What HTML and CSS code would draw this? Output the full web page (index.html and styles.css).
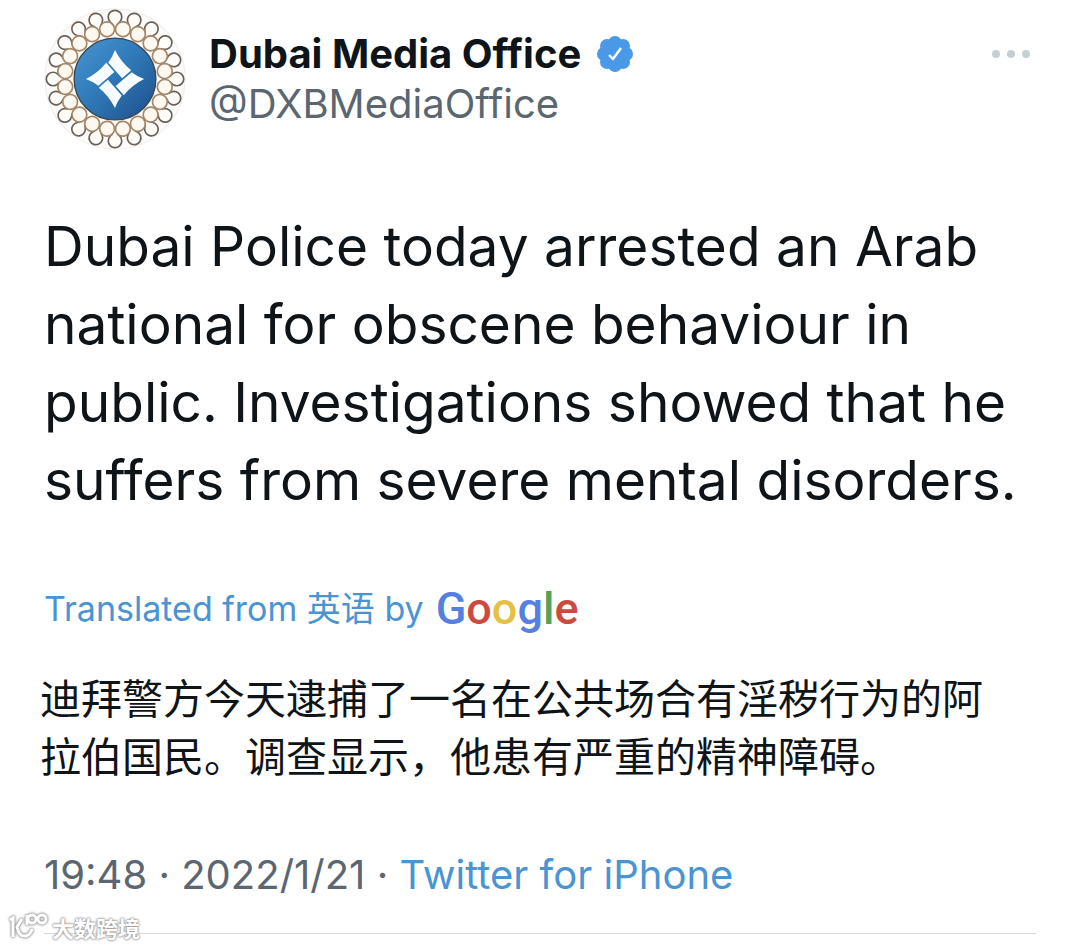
FILE: index.html
```html
<!DOCTYPE html>
<html lang="en">
  <head>
    <meta charset="UTF-8" />
    <meta name="viewport" content="width=device-width, initial-scale=1.0" />
    <title>Dubai Media Office</title>
    <link rel="stylesheet" href="styles.css">
  </head>
  <body>
    <article class="tweet">
      <header class="tweet-header">
        <svg class="avatar" viewBox="-210 -210 420 420" role="img" aria-label="Dubai Media Office">
          <defs>
            <linearGradient id="disc" x1="0" y1="0" x2="1" y2="1">
              <stop offset="0" stop-color="#4596d2" />
              <stop offset="0.5" stop-color="#2f77b6" />
              <stop offset="1" stop-color="#1d4d88" />
            </linearGradient>
            <path id="loop" class="loop" d="M-14 -148C-2 -156 -8 -164 -15 -170A20 20 0 1 1 15 -170C8 -164 2 -156 14 -148" />
            <circle id="ring" class="ring" cx="0" cy="-149" r="22" transform="rotate(9)" />
            <g id="loops">
              <use href="#loop" />
              <use href="#loop" transform="rotate(18)" />
              <use href="#loop" transform="rotate(36)" />
              <use href="#loop" transform="rotate(54)" />
              <use href="#loop" transform="rotate(72)" />
            </g>
            <g id="rings">
              <use href="#ring" />
              <use href="#ring" transform="rotate(18)" />
              <use href="#ring" transform="rotate(36)" />
              <use href="#ring" transform="rotate(54)" />
              <use href="#ring" transform="rotate(72)" />
            </g>
            <path id="blade" d="M0 -86Q18 -50 48 -26L21 -2L-20 -49Q-7 -66 0 -86Z" />
          </defs>
          <circle class="avatar-bg" r="207" />
          <use href="#loops" />
          <use href="#loops" transform="rotate(90)" />
          <use href="#loops" transform="rotate(180)" />
          <use href="#loops" transform="rotate(270)" />
          <use href="#rings" />
          <use href="#rings" transform="rotate(90)" />
          <use href="#rings" transform="rotate(180)" />
          <use href="#rings" transform="rotate(270)" />
          <circle class="disc" r="121" fill="url(#disc)" />
          <g fill="#f6fcff">
            <use href="#blade" />
            <use href="#blade" transform="rotate(90)" />
            <use href="#blade" transform="rotate(180)" />
            <use href="#blade" transform="rotate(270)" />
          </g>
        </svg>
        <div class="author">
          <div class="name-row">
            <h1 class="name">Dubai Media Office</h1>
            <svg class="verified" viewBox="0 0 36 36" role="img" aria-label="Verified account">
              <g fill="#4a99e9">
                <circle cx="18" cy="18" r="14" />
                <circle cx="18" cy="7" r="7" />
                <circle cx="26" cy="10" r="7" />
                <circle cx="29" cy="18" r="7" />
                <circle cx="26" cy="26" r="7" />
                <circle cx="18" cy="29" r="7" />
                <circle cx="10" cy="26" r="7" />
                <circle cx="7" cy="18" r="7" />
                <circle cx="10" cy="10" r="7" />
              </g>
              <path d="M12 19L16 23L24 12" fill="none" stroke="#fff" stroke-width="2.4" />
            </svg>
          </div>
          <a class="handle" href="#">@DXBMediaOffice</a>
        </div>
        <button class="more" type="button" aria-label="More">
          <svg viewBox="0 0 50 12" fill="#c4d0d3">
            <circle cx="10" cy="6" r="4" />
            <circle cx="25" cy="6" r="4" />
            <circle cx="40" cy="6" r="4" />
          </svg>
        </button>
      </header>

      <p class="text">Dubai Police today arrested an Arab national for obscene behaviour in public. Investigations showed that he suffers from severe mental disorders.</p>

      <a class="translated" href="#">
        <span>Translated from <span lang="zh">英语</span> by</span>
        <span class="google"><span class="blue">G</span><span class="red">o</span><span class="yellow">o</span><span class="blue">g</span><span class="green">l</span><span class="red">e</span></span>
      </a>

      <p class="translation" lang="zh">迪拜警方今天逮捕了一名在公共场合有淫秽行为的阿拉伯国民。调查显示，他患有严重的精神障碍。</p>

      <footer class="meta">
        <time datetime="2022-01-21T19:48">19:48 · 2022/1/21</time> · <a href="#">Twitter for iPhone</a>
      </footer>

      <div class="watermark" lang="zh">
        <svg viewBox="0 0 40 30" aria-hidden="true">
          <path d="M2 8L5 6V25" />
          <path d="M14 7L9 15Q11 25 18 24Q23 22 24 17" />
          <path d="M19 3V13" />
          <circle cx="24" cy="7" r="4" />
          <circle cx="34" cy="7" r="4" />
        </svg>
        <span>大数跨境</span>
      </div>
    </article>
  </body>
</html>
```
FILE: styles.css
```css
:root {
  --ink: #0f1419;
  --muted: #5b6671;
  --link: #4a94d4;
}

* {
  box-sizing: border-box;
  margin: 0;
  padding: 0;
}

body {
  min-height: 100vh;
  background: #fff;
  color: var(--ink);
  font-family: Inter, "Noto Sans CJK SC", sans-serif;
}

a {
  color: var(--link);
  text-decoration: none;
}

.tweet {
  position: relative;
  padding: 8px 44px 0;
}

.tweet-header {
  display: flex;
  align-items: flex-start;
}

.avatar {
  width: 142px;
  height: 142px;
  flex: none;
}

.avatar-bg {
  fill: #fcfbf9;
  stroke: #ececec;
  stroke-width: 3;
}

.loop {
  fill: #fffdfa;
  stroke: #6b6058;
  stroke-width: 5;
}

.ring {
  fill: #fdf8f0;
  stroke: #a58769;
  stroke-width: 5;
}

.disc {
  stroke: #3b4650;
  stroke-width: 4;
}

.author {
  flex: 1;
  padding: 21px 0 0 23px;
}

.name-row {
  display: flex;
  align-items: center;
  gap: 16px;
}

.name {
  font-size: 40px;
  font-weight: 700;
  line-height: 50px;
}

.verified {
  width: 36px;
  height: 36px;
}

.handle {
  color: var(--muted);
  font-size: 40px;
  line-height: 50px;
}

.more {
  border: none;
  background: none;
  margin-top: 40px;
  cursor: pointer;
}

.more svg {
  display: block;
  width: 50px;
  height: 12px;
}

.text {
  margin-top: 57px;
  font-size: 55px;
  line-height: 78px;
}

.translated {
  display: flex;
  align-items: center;
  gap: 12px;
  margin-top: 62px;
  font-size: 34px;
  line-height: 56px;
}

.google {
  font-family: Roboto, sans-serif;
  font-size: 45px;
  font-weight: 500;
}

.blue {
  color: #557fe0;
}

.red {
  color: #cc4b3f;
}

.yellow {
  color: #e6bf45;
}

.green {
  color: #54a058;
}

.translation {
  margin: 30px 16px 0 -4px;
  font-family: "Noto Sans CJK SC", sans-serif;
  font-size: 41px;
  line-height: 58px;
}

.meta {
  padding: 64px 0 30px;
  border-bottom: 1px solid #d5d9db;
  color: var(--muted);
  font-size: 40px;
  line-height: 56px;
}

.watermark {
  position: absolute;
  left: 8px;
  bottom: -9px;
  display: flex;
  align-items: center;
  gap: 4px;
  color: #fff;
  font-family: "Noto Sans CJK SC", sans-serif;
  font-size: 22px;
  font-weight: 700;
  line-height: 32px;
  text-shadow: 0 0 2px #999, 0 0 2px #999, 0 0 3px #aaa;
}

.watermark svg {
  width: 40px;
  height: 30px;
  fill: none;
  stroke: #fff;
  stroke-width: 3;
  filter: drop-shadow(0 0 1px #888) drop-shadow(0 0 1px #aaa);
}
```
